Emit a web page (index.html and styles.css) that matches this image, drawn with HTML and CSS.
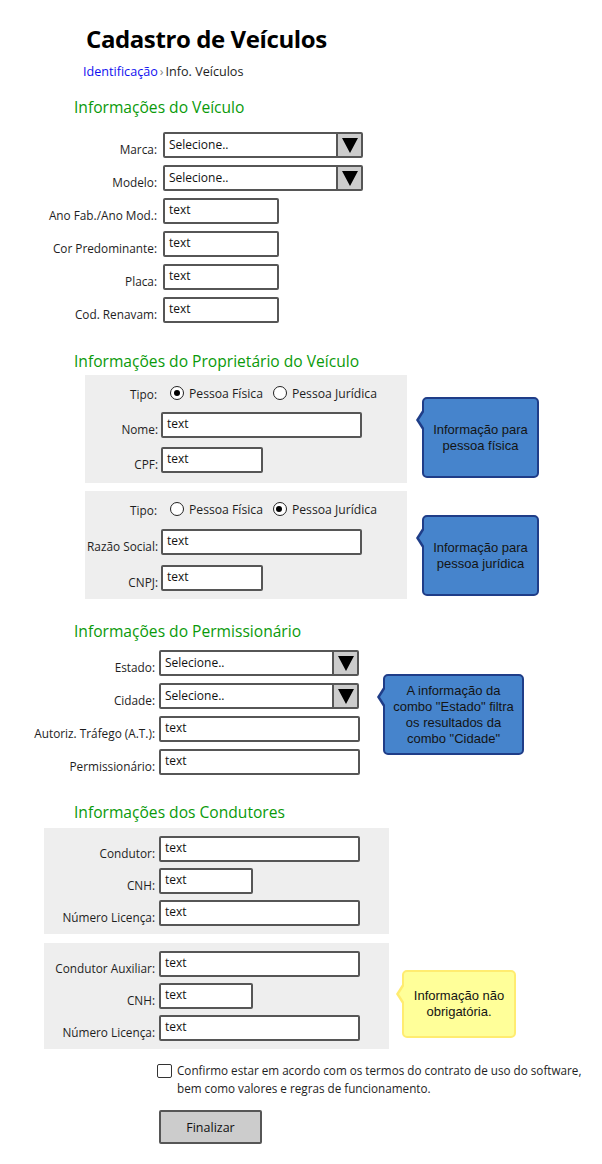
FILE: index.html
```html
<!DOCTYPE html>
<html lang="pt">
<head>
<meta charset="utf-8">
<title>Cadastro de Veículos</title>
<link rel="stylesheet" href="styles.css">
</head>
<body>
<div class="page">
  <h1 class="title">Cadastro de Veículos</h1>
  <div class="crumbs"><span class="crumb-link">Identificação</span><span class="sep">›</span><span>Info. Veículos</span></div>

  <h2 class="sec-title t1">Informações do Veículo</h2>
  <div class="form f1">
    <label>Marca:</label><div class="combo"><span class="val">Selecione..</span><span class="btn"><i class="tri"></i></span></div>
    <label>Modelo:</label><div class="combo"><span class="val">Selecione..</span><span class="btn"><i class="tri"></i></span></div>
    <label>Ano Fab./Ano Mod.:</label><div class="input w116">text</div>
    <label>Cor Predominante:</label><div class="input w116">text</div>
    <label>Placa:</label><div class="input w116">text</div>
    <label>Cod. Renavam:</label><div class="input w116">text</div>
  </div>

  <h2 class="sec-title t2">Informações do Proprietário do Veículo</h2>
  <div class="pair p1">
    <div class="box owner">
      <label>Tipo:</label>
      <div class="radios"><span class="radio on"></span><span class="rtext">Pessoa Física</span><span class="radio"></span><span class="rtext">Pessoa Jurídica</span></div>
      <label>Nome:</label><div class="input w201">text</div>
      <label>CPF:</label><div class="input w102">text</div>
    </div>
    <div class="callout blue c1">Informação para pessoa física</div>
  </div>
  <div class="pair p2">
    <div class="box owner">
      <label>Tipo:</label>
      <div class="radios"><span class="radio"></span><span class="rtext">Pessoa Física</span><span class="radio on"></span><span class="rtext">Pessoa Jurídica</span></div>
      <label>Razão Social:</label><div class="input w201">text</div>
      <label>CNPJ:</label><div class="input w102">text</div>
    </div>
    <div class="callout blue c2">Informação para pessoa jurídica</div>
  </div>

  <h2 class="sec-title t3">Informações do Permissionário</h2>
  <div class="pair p3">
    <div class="form f3">
      <label>Estado:</label><div class="combo"><span class="val">Selecione..</span><span class="btn"><i class="tri"></i></span></div>
      <label>Cidade:</label><div class="combo"><span class="val">Selecione..</span><span class="btn"><i class="tri"></i></span></div>
      <label>Autoriz. Tráfego (A.T.):</label><div class="input w201">text</div>
      <label>Permissionário:</label><div class="input w201">text</div>
    </div>
    <div class="callout blue c3">A informação da combo "Estado" filtra os resultados da combo "Cidade"</div>
  </div>

  <h2 class="sec-title t4">Informações dos Condutores</h2>
  <div class="box driver d1">
    <label>Condutor:</label><div class="input w201">text</div>
    <label>CNH:</label><div class="input w94">text</div>
    <label>Número Licença:</label><div class="input w201">text</div>
  </div>
  <div class="pair p4">
    <div class="box driver d2">
      <label>Condutor Auxiliar:</label><div class="input w201">text</div>
      <label>CNH:</label><div class="input w94">text</div>
      <label>Número Licença:</label><div class="input w201">text</div>
    </div>
    <div class="callout yellow c4">Informação não obrigatória.</div>
  </div>

  <div class="agree">
    <span class="check"></span>
    <p class="agree-text">Confirmo estar em acordo com os termos do contrato de uso do software,<br>bem como valores e regras de funcionamento.</p>
  </div>
  <div class="button">Finalizar</div>
</div>
</body>
</html>
```

FILE: styles.css
```css
* { box-sizing: border-box; }
html, body { margin: 0; padding: 0; background: #fff; }
body {
  font-family: "Open Sans", "DejaVu Sans", sans-serif;
  font-size: 11.8px;
  color: #1e1e1e;
  width: 602px;
}
.page { padding-bottom: 20px; }

.title {
  margin: 24px 0 0 86px;
  font-size: 24px;
  line-height: 30px;
  font-weight: 700;
  letter-spacing: -0.4px;
  color: #000;
}
.crumbs {
  margin: 10px 0 0 83px;
  line-height: 16px;
  font-size: 12.6px;
}
.crumb-link { color: #1010f0; }
.sep { color: #888; margin: 0 2px; }

.sec-title {
  margin: 0 0 0 74px;
  font-size: 15.6px;
  line-height: 20px;
  font-weight: 400;
  color: #0a9a0a;
}
.t1 { margin-top: 17px; }
.t2 { margin-top: 28px; }
.t3 { margin-top: 22px; }
.t4 { margin-top: 27px; }

label {
  justify-self: end;
  text-align: right;
  white-space: nowrap;
  line-height: 16px;
  padding-top: 9px;
  align-self: start;
}

.form {
  display: grid;
  row-gap: 7px;
  grid-auto-rows: 26px;
  align-items: start;
  justify-items: start;
}
.f1 {
  margin-top: 15px;
  grid-template-columns: 157px auto;
  column-gap: 6px;
}
.f3 {
  margin-top: 0;
  grid-template-columns: 155px auto;
  column-gap: 4px;
}

.input, .combo {
  height: 26px;
  background: #fff;
  border: 2px solid #565656;
  border-radius: 2px;
  font-size: 12px;
  line-height: 18px;
  color: #111;
}
.input { padding: 1px 0 0 4px; }
.w116 { width: 116px; }
.w201 { width: 201px; }
.w102 { width: 102px; }
.w94 { width: 94px; }

.combo {
  width: 200px;
  display: flex;
}
.combo .val { flex: 1; padding: 2px 0 0 4px; }
.combo .btn {
  width: 25px;
  background: #cccccc;
  border-left: 2px solid #565656;
  display: flex;
  align-items: center;
  justify-content: center;
}
.tri {
  width: 0;
  height: 0;
  border-left: 8px solid transparent;
  border-right: 8px solid transparent;
  border-top: 15px solid #000;
}

.pair {
  display: flex;
  align-items: flex-start;
}
.p1 { margin-top: 4px; }
.p2 { margin-top: 8px; }
.p3 { margin-top: 9px; }
.p4 { margin-top: 9px; }

.box {
  background: #eeeeee;
  display: grid;
  align-items: start;
  justify-items: start;
}
.owner {
  margin-left: 85px;
  width: 322px;
  height: 108px;
  padding: 8px 0 0 0;
  grid-template-columns: 73px auto;
  grid-template-rows: 20px 26px 26px;
  column-gap: 3px;
  row-gap: 9px;
}
.p2 .owner { row-gap: 10px; }
.owner label:first-child { padding-top: 3px; padding-right: 1px; }

.radios {
  display: flex;
  align-items: center;
  height: 20px;
  margin-left: 9px;
}
.radio {
  width: 14px;
  height: 14px;
  border: 1.5px solid #222;
  border-radius: 50%;
  background: #fff;
  position: relative;
  flex: none;
}
.radio.on::after {
  content: "";
  position: absolute;
  left: 2.5px;
  top: 2.5px;
  width: 6px;
  height: 6px;
  border-radius: 50%;
  background: #000;
}
.rtext { margin: 0 10px 0 5px; font-size: 12.2px; }

.driver {
  margin-left: 44px;
  width: 345px;
  height: 106px;
  padding-top: 8px;
  grid-template-columns: 111px auto;
  grid-template-rows: 26px 26px 26px;
  column-gap: 4px;
  row-gap: 6px;
}
.d1 { margin-top: 6px; }

.callout {
  position: relative;
  font-family: "Liberation Sans", Arial, sans-serif;
  font-size: 13px;
  line-height: 16px;
  text-align: center;
  color: #141414;
  border-radius: 5px;
  display: flex;
  align-items: center;
  justify-content: center;
}
.callout::before, .callout::after {
  content: "";
  position: absolute;
  width: 0;
  height: 0;
  border-top: 11px solid transparent;
  border-bottom: 11px solid transparent;
}
.blue {
  background: #4684cc;
  border: 2px solid #1f3d88;
}
.blue::before { left: -8px; top: 10px; border-right: 7px solid #1f3d88; }
.blue::after { left: -5px; top: 10px; border-right: 7px solid #4684cc; }
.c1 { margin: 22px 0 0 15px; width: 117px; height: 81px; padding: 0 8px; }
.c2 { margin: 24px 0 0 15px; width: 117px; height: 81px; padding: 0 8px; }
.c3 { margin: 24px 0 0 23px; width: 141px; height: 81px; padding: 0 4px; }

.yellow {
  background: #ffff99;
  border: 2px solid #ffec70;
}
.yellow::before { left: -8px; top: 11px; border-right: 7px solid #ffec70; }
.yellow::after { left: -5px; top: 11px; border-right: 7px solid #ffff99; }
.c4 { margin: 27px 0 0 13px; width: 114px; height: 68px; padding: 0 6px; }

.agree {
  margin: 12px 0 0 157px;
  display: flex;
  align-items: flex-start;
}
.check {
  width: 15px;
  height: 14px;
  margin-top: 3px;
  border: 1.5px solid #333;
  border-radius: 2px;
  background: #fff;
  flex: none;
}
.agree-text {
  margin: 0 0 0 5px;
  line-height: 18px;
  font-size: 11.7px;
}
.button {
  margin: 13px 0 0 159px;
  width: 103px;
  height: 34px;
  background: #cccccc;
  border: 2px solid #565656;
  border-radius: 2px;
  display: flex;
  align-items: center;
  justify-content: center;
  font-size: 12.5px;
  color: #111;
}
```
